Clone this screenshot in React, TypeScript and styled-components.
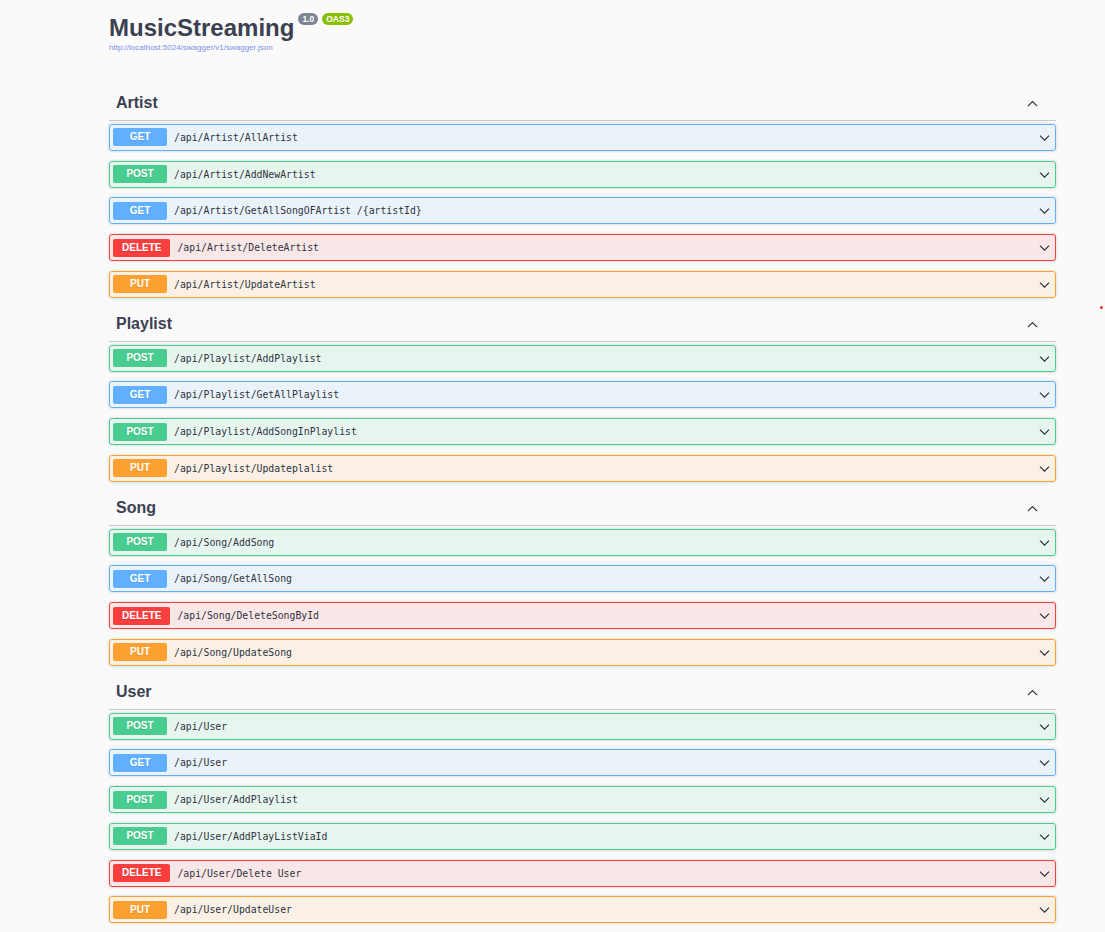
import React from 'react';
import styled, { createGlobalStyle } from 'styled-components';

type Method = 'GET' | 'POST' | 'PUT' | 'DELETE';

const colors: Record<Method, { main: string; bg: string }> = {
  GET: { main: '#61affe', bg: 'rgba(97, 175, 254, 0.1)' },
  POST: { main: '#49cc90', bg: 'rgba(73, 204, 144, 0.1)' },
  PUT: { main: '#fca130', bg: 'rgba(252, 161, 48, 0.1)' },
  DELETE: { main: '#f93e3e', bg: 'rgba(249, 62, 62, 0.1)' },
};

const sections: { name: string; ops: [Method, string][] }[] = [
  {
    name: 'Artist',
    ops: [
      ['GET', '/api/Artist/AllArtist'],
      ['POST', '/api/Artist/AddNewArtist'],
      ['GET', '/api/Artist/GetAllSongOFArtist /{artistId}'],
      ['DELETE', '/api/Artist/DeleteArtist'],
      ['PUT', '/api/Artist/UpdateArtist'],
    ],
  },
  {
    name: 'Playlist',
    ops: [
      ['POST', '/api/Playlist/AddPlaylist'],
      ['GET', '/api/Playlist/GetAllPlaylist'],
      ['POST', '/api/Playlist/AddSongInPlaylist'],
      ['PUT', '/api/Playlist/Updateplalist'],
    ],
  },
  {
    name: 'Song',
    ops: [
      ['POST', '/api/Song/AddSong'],
      ['GET', '/api/Song/GetAllSong'],
      ['DELETE', '/api/Song/DeleteSongById'],
      ['PUT', '/api/Song/UpdateSong'],
    ],
  },
  {
    name: 'User',
    ops: [
      ['POST', '/api/User'],
      ['GET', '/api/User'],
      ['POST', '/api/User/AddPlaylist'],
      ['POST', '/api/User/AddPlayListViaId'],
      ['DELETE', '/api/User/Delete User'],
      ['PUT', '/api/User/UpdateUser'],
    ],
  },
];

const Global = createGlobalStyle`
  body {
    margin: 0;
    background: #fafafa;
    font-family: "Liberation Sans", Arial, sans-serif;
    color: #3b4151;
  }
`;

const Page = styled.div`
  position: relative;
  padding: 0 49px 0 109px;
  width: 947px;
`;

const Info = styled.div`
  padding-top: 14px;
  margin-bottom: 34px;
`;

const TitleRow = styled.div`
  display: flex;
  align-items: flex-start;
`;

const Title = styled.h2`
  margin: 0;
  font-size: 24px;
  line-height: 28.8px;
  font-weight: 700;
  color: #3b4151;
`;

const Badge = styled.span<{ $bg: string }>`
  margin: -1px 0 0 4px;
  padding: 0 4px;
  height: 12px;
  line-height: 12px;
  border-radius: 6px;
  background: ${(p) => p.$bg};
  color: #fff;
  font-size: 8.5px;
  font-weight: 700;
`;

const Url = styled.a`
  display: block;
  font-size: 8px;
  line-height: 10px;
  color: #7f8fe6;
  text-decoration: none;
`;

const Section = styled.section``;

const Heading = styled.div`
  display: flex;
  align-items: center;
  justify-content: space-between;
  padding: 6.5px 17px 6.5px 7px;
  border-bottom: 1px solid #c6c8cd;
  margin-bottom: 3px;
`;

const HeadingText = styled.h3`
  margin: 0;
  font-size: 16px;
  line-height: 20px;
  font-weight: 700;
  color: #3b4151;
`;

const Row = styled.div<{ $method: Method }>`
  display: flex;
  align-items: center;
  box-sizing: border-box;
  height: 27px;
  margin-bottom: 9.75px;
  padding: 0 4px 0 3px;
  border: 1px solid ${(p) => colors[p.$method].main};
  border-radius: 3px;
  background: ${(p) => colors[p.$method].bg};
  box-shadow: 0 0 3px rgba(0, 0, 0, 0.19);
`;

const MethodTag = styled.span<{ $method: Method }>`
  box-sizing: border-box;
  min-width: 54px;
  height: 18px;
  padding: 0 9px;
  line-height: 18px;
  text-align: center;
  border-radius: 2px;
  background: ${(p) => colors[p.$method].main};
  color: #fff;
  font-size: 10px;
  font-weight: 700;
  text-shadow: 0 1px 0 rgba(0, 0, 0, 0.1);
`;

const Path = styled.span`
  flex: 1;
  padding-left: 7px;
  font-family: "DejaVu Sans Mono", "Liberation Mono", monospace;
  font-size: 9.8px;
  color: #2f3441;
  white-space: pre;
`;

const Dot = styled.span`
  position: absolute;
  left: 1100px;
  top: 306px;
  width: 3px;
  height: 3px;
  border-radius: 50%;
  background: #e8302a;
`;

const Chevron = ({ up }: { up?: boolean }) => (
  <svg width="13" height="13" viewBox="0 0 20 20">
    <path
      d={up ? 'M3 14 L10 7 L17 14' : 'M3 7 L10 14 L17 7'}
      fill="none"
      stroke="#2b2f38"
      strokeWidth="1.8"
    />
  </svg>
);

export default function App() {
  return (
    <Page>
      <Global />
      <Info>
        <TitleRow>
          <Title>MusicStreaming</Title>
          <Badge $bg="#7d8492">1.0</Badge>
          <Badge $bg="#89bf04">OAS3</Badge>
        </TitleRow>
        <Url href="#">http://localhost:5024/swagger/v1/swagger.json</Url>
      </Info>
      {sections.map((s) => (
        <Section key={s.name}>
          <Heading>
            <HeadingText>{s.name}</HeadingText>
            <Chevron up />
          </Heading>
          {s.ops.map(([m, path], i) => (
            <Row key={i} $method={m}>
              <MethodTag $method={m}>{m}</MethodTag>
              <Path>{path}</Path>
              <Chevron />
            </Row>
          ))}
        </Section>
      ))}
      <Dot />
    </Page>
  );
}
